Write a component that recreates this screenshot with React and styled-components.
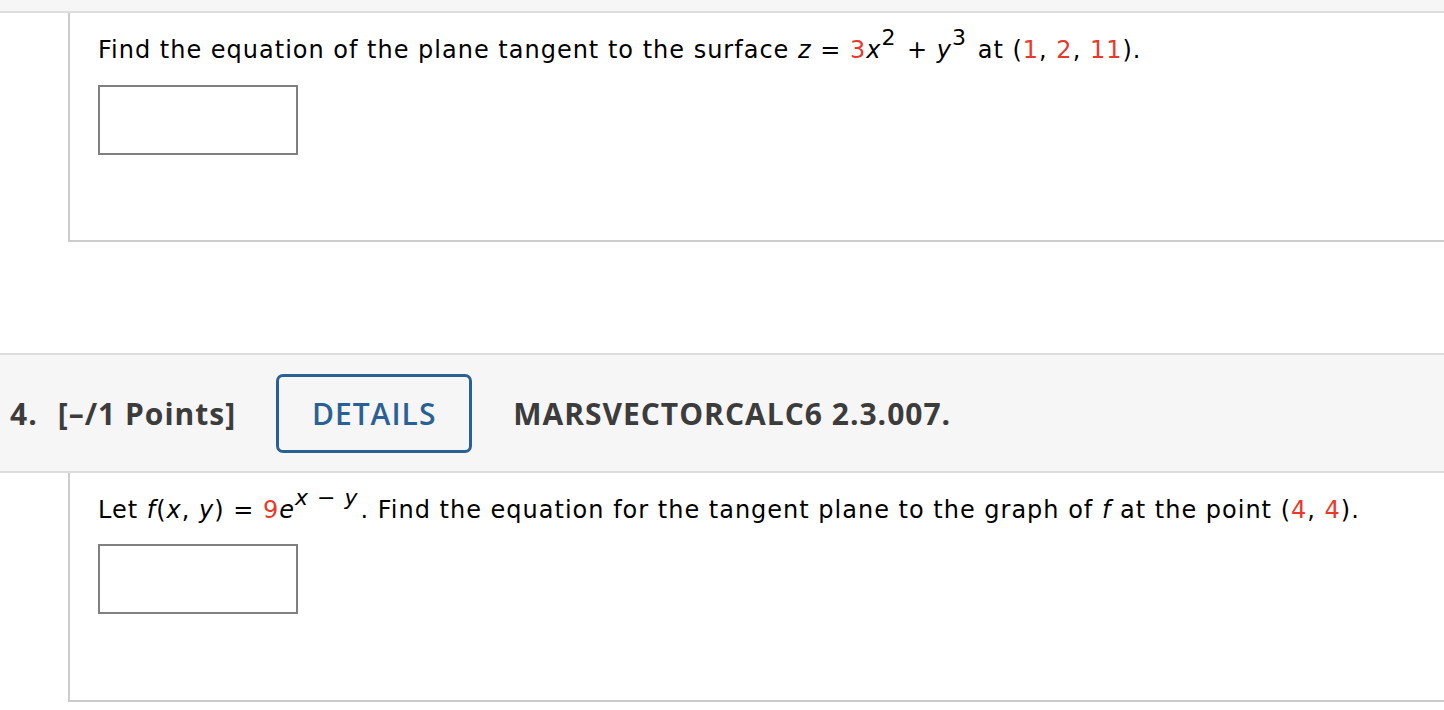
import styled, { createGlobalStyle } from "styled-components";

const GlobalStyle = createGlobalStyle`
  body {
    margin: 0;
    background: #ffffff;
    font-family: "DejaVu Sans", Verdana, sans-serif;
  }
`;

const Page = styled.div`
  width: 1444px;
  height: 710px;
  overflow: hidden;
  display: flex;
  flex-direction: column;
`;

const HeaderStub = styled.div`
  height: 11px;
  background: #f6f6f6;
  border-bottom: 2px solid #dddddd;
`;

const Header = styled.div`
  height: 116px;
  background: #f6f6f6;
  border-top: 2px solid #dddddd;
  border-bottom: 2px solid #dddddd;
  display: flex;
  align-items: center;
  padding-left: 10px;
  font-family: "Open Sans", sans-serif;
  font-weight: 700;
  font-size: 30px;
  letter-spacing: 1px;
  color: #3c3c3c;
`;

const Number = styled.span`
  margin-right: 20px;
`;

const Points = styled.span`
  margin-right: 40px;
`;

const DetailsButton = styled.button`
  width: 196px;
  height: 79px;
  border: 3px solid #2a6195;
  border-radius: 7px;
  background: transparent;
  color: #2a6195;
  font-family: "Open Sans", sans-serif;
  font-weight: 600;
  font-size: 30px;
  letter-spacing: 1px;
  margin-right: 41px;
  padding: 0;
`;

const Body = styled.div`
  margin-left: 68px;
  height: ${(p) => p.h}px;
  box-sizing: border-box;
  border-left: 2px solid #cccccc;
  border-bottom: 2px solid #cccccc;
  padding: ${(p) => p.top}px 0 0 28px;
`;

const Gap = styled.div`
  height: 111px;
`;

const Prompt = styled.div`
  font-size: 24px;
  line-height: 36px;
  letter-spacing: 1px;
  color: #000000;
  white-space: nowrap;
`;

const Red = styled.span`
  color: #e8392b;
`;

const Var = styled.i`
  font-style: italic;
`;

const Sup = styled.sup`
  font-size: 22px;
  line-height: 0;
  vertical-align: 13px;
  margin-right: 2px;
`;

const Answer = styled.div`
  width: 200px;
  height: 70px;
  box-sizing: border-box;
  border: 2px solid #808080;
  margin-top: ${(p) => p.gap}px;
`;

export default function App() {
  return (
    <Page>
      <GlobalStyle />
      <HeaderStub />
      <Body h={229} top={19}>
        <Prompt>
          Find the equation of the plane tangent to the surface <Var>z</Var> ={" "}
          <Red>3</Red>
          <Var>x</Var>
          <Sup>2</Sup> + <Var>y</Var>
          <Sup>3</Sup> at (<Red>1</Red>, <Red>2</Red>, <Red>11</Red>).
        </Prompt>
        <Answer gap={17} />
      </Body>
      <Gap />
      <Header>
        <Number>4.</Number>
        <Points>[–/1 Points]</Points>
        <DetailsButton>DETAILS</DetailsButton>
        <span>MARSVECTORCALC6 2.3.007.</span>
      </Header>
      <Body h={229} top={19}>
        <Prompt>
          Let <Var>f</Var>(<Var>x</Var>, <Var>y</Var>) = <Red>9</Red>
          <Var>e</Var>
          <Sup>
            <Var>x</Var> − <Var>y</Var>
          </Sup>
          . Find the equation for the tangent plane to the graph of <Var>f</Var> at the
          point (<Red>4</Red>, <Red>4</Red>).
        </Prompt>
        <Answer gap={16} />
      </Body>
    </Page>
  );
}
